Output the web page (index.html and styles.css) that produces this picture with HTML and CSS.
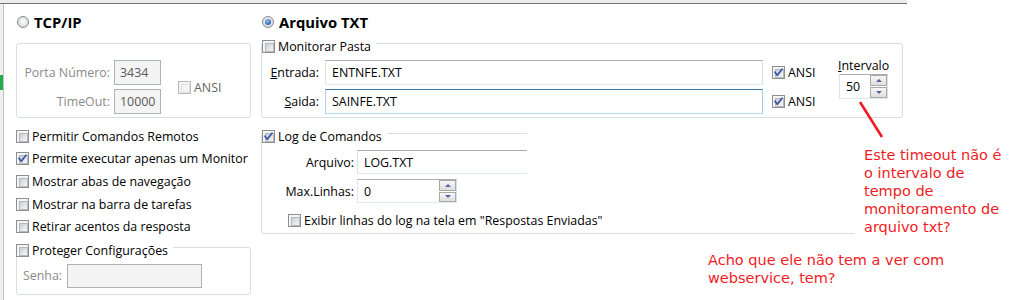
FILE: index.html
```html
<!DOCTYPE html>
<html>
<head>
<meta charset="utf-8">
<link rel="stylesheet" href="styles.css">
</head>
<body>
<div class="screen">
  <div class="topline"></div>
  <div class="main">
    <div class="edge"><span class="green"></span></div>

    <div class="col col-left">
      <div class="heading"><span class="radio"></span><span>TCP/IP</span></div>
      <div class="group tcp">
        <div class="tcp-grid">
          <span class="lbl dis">Porta Número:</span>
          <span class="input dis">3434</span>
          <div class="ansi-dis"><span class="cb disabled"></span><span>ANSI</span></div>
          <span class="lbl dis">TimeOut:</span>
          <span class="input dis">10000</span>
        </div>
      </div>
      <div class="options">
        <div class="opt"><span class="cb"></span><span>Permitir Comandos Remotos</span></div>
        <div class="opt"><span class="cb checked"><svg viewBox="0 0 13 13"><path d="M3 6.2 L5.3 9.2 L10 3.2" fill="none" stroke="#3c55a5" stroke-width="1.8" stroke-linecap="round" stroke-linejoin="round"/></svg></span><span>Permite executar apenas um Monitor</span></div>
        <div class="opt"><span class="cb"></span><span>Mostrar abas de navegação</span></div>
        <div class="opt"><span class="cb"></span><span>Mostrar na barra de tarefas</span></div>
        <div class="opt"><span class="cb"></span><span>Retirar acentos da resposta</span></div>
      </div>
      <div class="group proteger">
        <div class="legend leg-left"><span class="cb"></span><span>Proteger Configurações</span></div>
        <div class="senha-row"><span class="lbl dis">Senha:</span><span class="input dis senha"></span></div>
      </div>
    </div>

    <div class="col col-right">
      <div class="heading"><span class="radio on"></span><span>Arquivo TXT</span></div>
      <div class="group monitor">
        <div class="legend"><span class="cb"></span><span>Monitorar Pasta</span></div>
        <div class="mon-grid">
          <span class="lbl"><u>E</u>ntrada:</span>
          <span class="input">ENTNFE.TXT</span>
          <div class="ansi"><span class="cb checked"><svg viewBox="0 0 13 13"><path d="M3 6.2 L5.3 9.2 L10 3.2" fill="none" stroke="#3c55a5" stroke-width="1.8" stroke-linecap="round" stroke-linejoin="round"/></svg></span><span>ANSI</span></div>
          <span class="lbl"><u>S</u>aida:</span>
          <span class="input focus">SAINFE.TXT</span>
          <div class="ansi"><span class="cb checked"><svg viewBox="0 0 13 13"><path d="M3 6.2 L5.3 9.2 L10 3.2" fill="none" stroke="#3c55a5" stroke-width="1.8" stroke-linecap="round" stroke-linejoin="round"/></svg></span><span>ANSI</span></div>
        </div>
        <div class="intervalo">
          <span class="int-lbl"><u>I</u>ntervalo</span>
          <div class="spin int-spin"><span class="spin-val">50</span><span class="spin-btns"><span class="sbtn up"></span><span class="sbtn down"></span></span></div>
        </div>
      </div>

      <div class="group log">
        <div class="legend"><span class="cb checked"><svg viewBox="0 0 13 13"><path d="M3 6.2 L5.3 9.2 L10 3.2" fill="none" stroke="#3c55a5" stroke-width="1.8" stroke-linecap="round" stroke-linejoin="round"/></svg></span><span>Log de Comandos</span></div>
        <div class="log-grid">
          <span class="lbl">Arquivo:</span>
          <span class="input log-file">LOG.TXT</span>
          <span class="lbl">Max.Linhas:</span>
          <div class="spin max-spin"><span class="spin-val">0</span><span class="spin-btns"><span class="sbtn up"></span><span class="sbtn down"></span></span></div>
        </div>
        <div class="exibir"><span class="cb"></span><span>Exibir linhas do log na tela em "Respostas Enviadas"</span></div>
        <div class="mask"></div>
      </div>
    </div>
  </div>

  <svg class="arrow" viewBox="0 0 40 50" width="40" height="50"><line x1="5" y1="4" x2="27" y2="39" stroke="#ee1c25" stroke-width="2.6"/></svg>
  <div class="note note1">Este timeout não é<br>o intervalo de<br>tempo de<br>monitoramento de<br>arquivo txt?</div>
  <div class="note note2">Acho que ele não tem a ver com<br>webservice, tem?</div>
</div>
</body>
</html>
```

FILE: styles.css
```css
* { box-sizing: border-box; }
html, body { margin: 0; padding: 0; }
body {
  width: 1026px;
  height: 300px;
  overflow: hidden;
  background: #fff;
  font-family: "Open Sans", "Noto Sans", sans-serif;
  font-size: 12.4px;
  color: #000;
}
.screen { position: relative; width: 1026px; height: 300px; }

.topline {
  width: 907px;
  height: 4px;
  background: #ececec;
  border-bottom: 1px solid #70707c;
}
.main { display: flex; height: 296px; }
.edge {
  position: relative;
  flex: none;
  width: 4px;
  background: #f0f0f0;
  border-right: 1px solid #c2c2c2;
}
.green {
  position: absolute;
  left: 0;
  top: 71px;
  width: 3px;
  height: 15px;
  background: #1fae4b;
}

.col { flex: none; padding-top: 9px; }
.col-left { width: 235px; margin-left: 12px; }
.col-right { margin-left: 10px; }

.heading {
  height: 18px;
  display: flex;
  align-items: center;
  gap: 5px;
  font-weight: 700;
  font-size: 14.8px;
  padding-left: 1px;
}

.radio {
  position: relative;
  flex: none;
  width: 12px;
  height: 12px;
  border-radius: 50%;
  border: 1px solid #8a8c90;
  background: radial-gradient(circle at 50% 45%, #ffffff 0%, #e8e9eb 45%, #c4c6ca 100%);
}
.radio.on::after {
  content: "";
  position: absolute;
  left: 2px;
  top: 2px;
  width: 6px;
  height: 6px;
  border-radius: 50%;
  background: radial-gradient(circle at 40% 35%, #9cc6f0 0%, #3a73c0 55%, #1a3f86 100%);
}

.cb {
  position: relative;
  flex: none;
  width: 13px;
  height: 13px;
  border: 1px solid #8e8f8f;
  background: #f4f4f4;
  padding: 2px;
}
.cb::before {
  content: "";
  display: block;
  width: 100%;
  height: 100%;
  border: 1px solid #b4b8bf;
  background: linear-gradient(135deg, #c9ccd2 0%, #e6e7ea 60%, #f7f7f7 100%);
}
.cb svg { position: absolute; left: -1px; top: -1px; width: 13px; height: 13px; }
.cb.disabled { border-color: #b9b9b9; }
.cb.disabled::before { border-color: #e0e0e0; background: #f4f4f4; }

.group {
  position: relative;
  border: 1px solid #d5dfe5;
  border-radius: 3px;
}
.legend {
  position: absolute;
  top: -4px;
  left: 0;
  height: 13px;
  display: flex;
  align-items: center;
  gap: 3px;
  padding-right: 5px;
  background: #fff;
  line-height: 13px;
  white-space: nowrap;
}
.leg-left { left: -1px; }

.lbl { display: flex; align-items: center; justify-content: flex-end; white-space: nowrap; }
.dis { color: #8b8b8b; }

.input {
  display: flex;
  align-items: center;
  padding-left: 6px;
  background: #fff;
  border: 1px solid;
  border-color: #abadb3 #dbdfe6 #e3e9ef #e2e3ea;
  white-space: nowrap;
  overflow: hidden;
}
.input.focus { border-color: #3d7bad #a4c9e3 #b7d9ed #b5cfe7; }
.input.dis {
  color: #5a5a5a;
  background: #f4f4f4;
  border-color: #adb2b5;
  padding-left: 5px;
}

/* TCP group */
.tcp { margin-top: 12px; height: 75px; padding-top: 16px; }
.tcp-grid {
  display: grid;
  grid-template-columns: 93px 47px auto;
  grid-template-rows: 25px 25px;
  column-gap: 4px;
  row-gap: 4px;
}
.ansi-dis {
  grid-column: 3;
  grid-row: 1 / 3;
  align-self: center;
  margin-left: 13px;
  margin-top: 1px;
  display: flex;
  align-items: center;
  gap: 3px;
  color: #666;
}

.options { margin-top: 7px; }
.opt {
  height: 22.6px;
  display: flex;
  align-items: center;
  gap: 3px;
  white-space: nowrap;
}

.proteger { margin-top: 9px; height: 48px; padding: 16px 0 0 6px; }
.senha-row { display: flex; align-items: center; gap: 5px; }
.senha { width: 135px; height: 24px; background: #f0f0f0; border-color: #c3c3c3; }

/* Monitor group */
.monitor {
  margin-top: 12px;
  width: 642px;
  height: 75px;
  padding-top: 16px;
  display: flex;
}
.mon-grid {
  display: grid;
  grid-template-columns: 63px 438px 75px;
  grid-template-rows: 25px 25px;
  row-gap: 4px;
}
.mon-grid .lbl { padding-right: 6px; }
.ansi { display: flex; align-items: center; gap: 3px; padding-left: 9px; }

.intervalo { display: flex; flex-direction: column; }
.int-lbl { height: 14px; line-height: 14px; margin-top: -1px; }
.spin {
  display: flex;
  background: #fff;
  border: 1px solid;
  border-color: #abadb3 #dbdfe6 #e3e9ef #e2e3ea;
}
.spin-val { flex: 1; display: flex; align-items: center; padding-left: 6px; }
.spin-btns { width: 17px; display: flex; flex-direction: column; gap: 1px; }
.sbtn {
  flex: 1;
  display: flex;
  align-items: center;
  justify-content: center;
  border: 1px solid #a9a9a9;
  background: linear-gradient(#f7f7f7, #dedede);
}
.sbtn.up::after {
  content: "";
  border-left: 3px solid transparent;
  border-right: 3px solid transparent;
  border-bottom: 3px solid #52649a;
}
.sbtn.down::after {
  content: "";
  border-left: 3px solid transparent;
  border-right: 3px solid transparent;
  border-top: 3px solid #52649a;
}
.int-spin { width: 49px; height: 25px; margin-left: 1px; margin-top: 1px; }

/* Log group */
.log {
  margin-top: 15px;
  width: 595px;
  height: 101px;
  padding-top: 16px;
}
.log-grid {
  display: grid;
  grid-template-columns: 95px auto;
  grid-template-rows: 24px 24px;
  row-gap: 5px;
}
.log-grid .lbl { padding-right: 3px; }
.log-file { width: 320px; }
.max-spin { width: 100px; height: 24px; }
.exibir {
  position: relative;
  z-index: 1;
  margin-top: 11px;
  height: 13px;
  display: flex;
  align-items: center;
  gap: 3px;
  padding-left: 26px;
  white-space: nowrap;
}
.mask {
  position: absolute;
  left: 265px;
  top: -14px;
  right: -2px;
  bottom: 0;
  background: #fff;
}

/* annotations */
.arrow { position: absolute; left: 855px; top: 98px; }
.note {
  position: absolute;
  font-family: "DejaVu Sans", sans-serif;
  font-size: 14.5px;
  line-height: 18px;
  color: #ee1c25;
  white-space: nowrap;
}
.note1 { left: 864px; top: 146px; }
.note2 { left: 708px; top: 251px; }
```
